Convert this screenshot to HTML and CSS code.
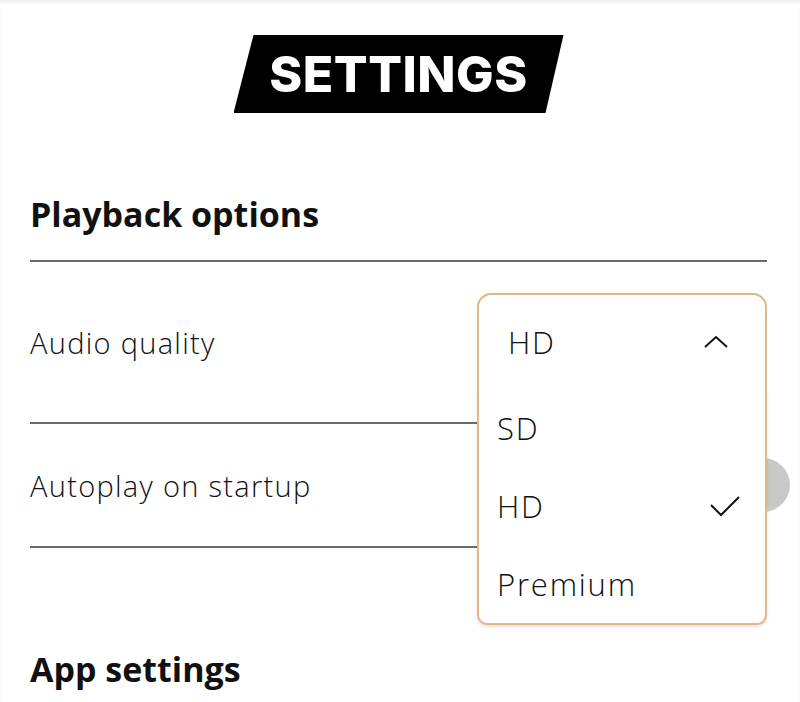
FILE: index.html
```html
<!DOCTYPE html>
<html lang="en">
<head>
    <meta charset="UTF-8">
    <meta name="viewport" content="width=device-width, initial-scale=1.0">
    <title>Settings</title>
    <link rel="stylesheet" href="styles.css">
</head>
<body>
    <div class="page">
        <div class="banner">
            <h1 class="banner-title">SETTINGS</h1>
        </div>

        <h2 class="section-title">Playback options</h2>
        <div class="row">
            <span class="row-label">Audio quality</span>
            <div class="select">
                <div class="select-head">
                    <span>HD</span>
                    <svg class="chevron" width="26" height="14" viewBox="0 0 26 14">
                        <path d="M2 12 L13 2 L24 12" fill="none" stroke="#111" stroke-width="2"/>
                    </svg>
                </div>
                <ul class="select-list">
                    <li class="option">SD</li>
                    <li class="option">HD
                        <svg class="check" width="32" height="22" viewBox="0 0 32 22">
                            <path d="M2 10 L12 20 L30 2" fill="none" stroke="#111" stroke-width="2"/>
                        </svg>
                    </li>
                    <li class="option">Premium</li>
                </ul>
            </div>
        </div>
        <div class="row row-toggle">
            <span class="row-label">Autoplay on startup</span>
            <div class="toggle"><span class="knob"></span></div>
        </div>

        <h2 class="section-title section-next">App settings</h2>
    </div>
</body>
</html>
```

FILE: styles.css
```css
body {
    margin: 0;
    background: #fff;
    color: #111;
    font-family: "Open Sans", Lato, sans-serif;
}
.page {
    padding: 0 33px 0 30px;
    box-shadow: inset 0 4px 4px -2px rgba(0,0,0,0.08);
    min-height: 702px;
    box-sizing: border-box;
    overflow: hidden;
}
.banner {
    display: flex;
    justify-content: center;
    padding-top: 35px;
}
.banner-title {
    margin: 0;
    background: #000;
    color: #fff;
    font-family: Inter, sans-serif;
    font-weight: 800;
    font-size: 50px;
    letter-spacing: 0.5px;
    line-height: 78px;
    width: 330px;
    text-align: center;
    clip-path: polygon(20px 0, 330px 0, 312px 100%, 0 100%);
}
.section-title {
    margin: 81px 0 0;
    font-size: 34px;
    font-weight: 700;
    line-height: 40px;
    padding-bottom: 26px;
    border-bottom: 2px solid #6a6a6a;
}
.section-next {
    margin-top: 101px;
    border-bottom: none;
}
.row {
    display: flex;
    align-items: center;
    justify-content: space-between;
    border-bottom: 2px solid #6a6a6a;
    height: 160px;
}
.row-toggle {
    height: 122px;
}
.row-label {
    font-size: 29px;
    font-weight: 300;
    letter-spacing: 1.3px;
}
.select {
    position: relative;
    width: 290px;
    z-index: 2;
}
.select-head {
    display: flex;
    align-items: center;
    justify-content: space-between;
    height: 94px;
    padding: 0 36px 0 29px;
    border: 2px solid #e2b685;
    border-radius: 14px 14px 0 0;
    font-size: 31px;
    font-weight: 300;
    letter-spacing: 1.8px;
}
.select-list {
    position: absolute;
    top: 96px;
    left: 0;
    right: 0;
    margin: 0;
    padding: 0;
    list-style: none;
    background: #fff;
    border: 2px solid #e2b685;
    border-top: none;
    border-radius: 0 0 10px 10px;
    box-shadow: 0 2px 3px rgba(0,0,0,0.12);
}
.option {
    display: flex;
    align-items: center;
    justify-content: space-between;
    height: 78px;
    padding: 0 24px 0 18px;
    font-size: 31px;
    font-weight: 300;
    letter-spacing: 1.8px;
}
.toggle {
    position: relative;
    width: 60px;
    height: 30px;
}
.knob {
    position: absolute;
    right: -23px;
    top: -12px;
    width: 54px;
    height: 54px;
    border-radius: 50%;
    background: #c8c8c8;
}
```
